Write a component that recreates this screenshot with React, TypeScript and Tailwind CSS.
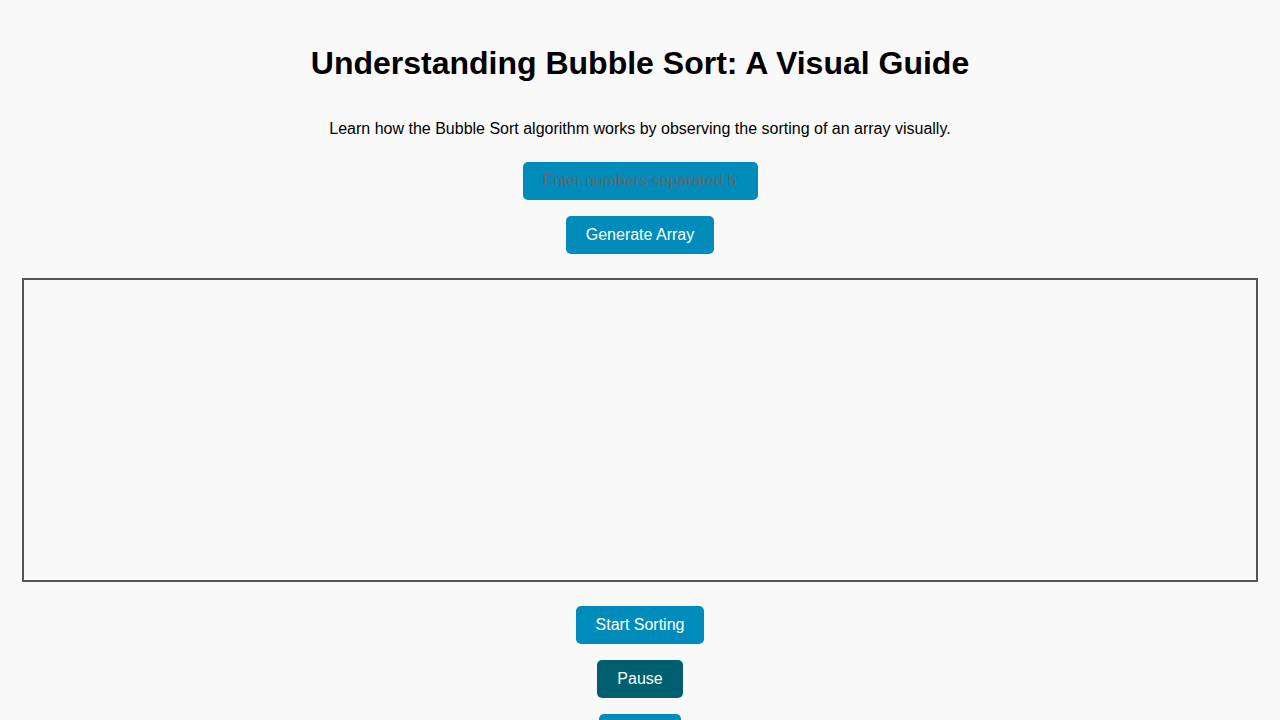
export default function App() {
  return (
    <div
      className="min-h-screen bg-[#f9f9f9] px-[22px] flex flex-col items-center text-black"
      style={{ fontFamily: '"Liberation Sans", Arial, sans-serif' }}
    >
      <h1 className="mt-[45px] text-[32px] leading-[37px] font-bold text-center">
        Understanding Bubble Sort: A Visual Guide
      </h1>
      <p className="mt-[38px] text-base leading-[18px] text-center">
        Learn how the Bubble Sort algorithm works by observing the sorting of an array visually.
      </p>

      {/* Input controls */}
      <input
        type="text"
        placeholder="Enter numbers separated by commas"
        className="mt-[24px] w-[235px] h-[38px] px-5 rounded-[5px] bg-[#008cba] text-base text-white placeholder:text-[#666] outline-none"
      />
      <button className="mt-4 h-[38px] px-5 rounded-[5px] bg-[#008cba] text-white text-base leading-[18px]">
        Generate Array
      </button>

      {/* Visual area */}
      <div className="mt-6 w-full h-[304px] border-2 border-[#555]"></div>

      <button className="mt-6 h-[38px] px-5 rounded-[5px] bg-[#008cba] text-white text-base leading-[18px]">
        Start Sorting
      </button>
      <button className="mt-4 h-[38px] px-5 rounded-[5px] bg-[#005f6f] text-white text-base leading-[18px]">
        Pause
      </button>
      <button className="mt-4 mb-5 h-[38px] px-5 rounded-[5px] bg-[#008cba] text-white text-base leading-[18px]">
        Reset
      </button>
    </div>
  )
}
